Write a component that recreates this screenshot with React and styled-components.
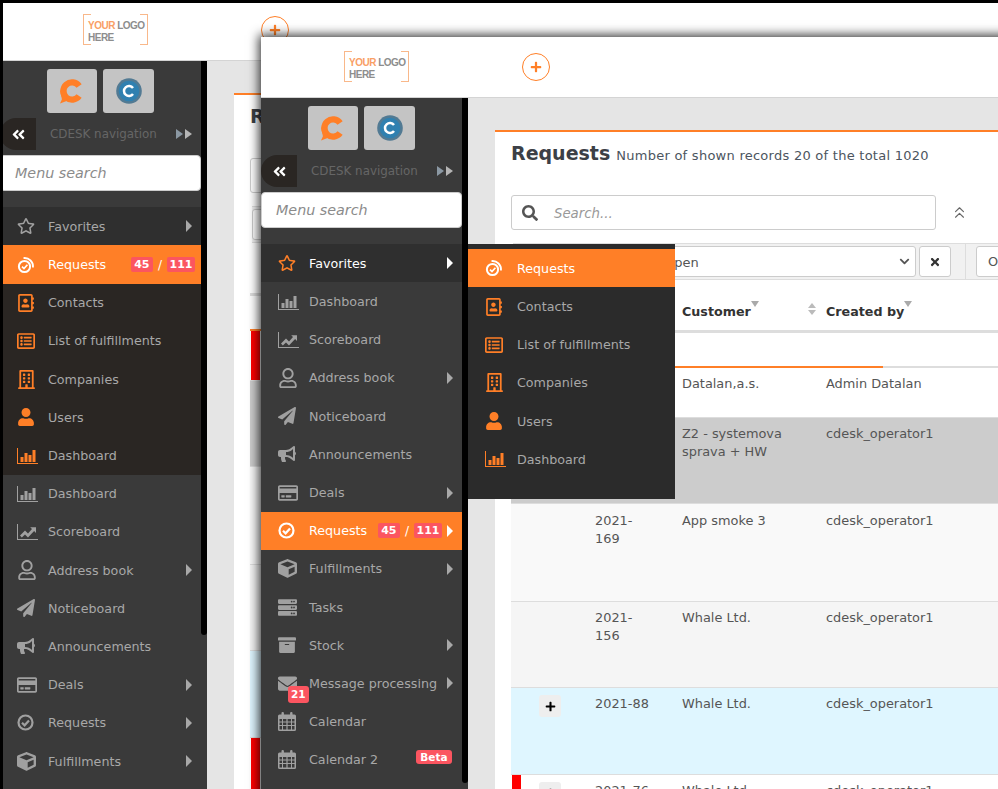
import React from "react";
import styled, { createGlobalStyle } from "styled-components";
import { ChevronsUp } from "lucide-react";
import {
  FaAngleDoubleLeft,
  FaArchive,
  FaBullhorn,
  FaChevronDown,
  FaCube,
  FaEnvelope,
  FaPaperPlane,
  FaPlus,
  FaRegAddressBook,
  FaRegBuilding,
  FaRegCreditCard,
  FaRegListAlt,
  FaRegStar,
  FaRegUser,
  FaSearch,
  FaServer,
  FaTimes,
  FaUser,
} from "react-icons/fa";

const ORANGE = "#ff7f27";

const GlobalStyle = createGlobalStyle`
  html, body {
    margin: 0;
    padding: 0;
    background: #000;
  }
  * {
    box-sizing: border-box;
  }
`;

const Desktop = styled.div`
  position: relative;
  width: 998px;
  height: 789px;
  overflow: hidden;
  font-family: "DejaVu Sans", Verdana, sans-serif;
  font-size: 12.9px;
`;

const Win = styled.div`
  position: absolute;
  left: ${(p) => p.$left}px;
  top: ${(p) => p.$top}px;
  width: 1000px;
  height: 800px;
  display: flex;
  flex-direction: column;
  background: #e5e5e5;
  box-shadow: ${(p) => (p.$front ? "0 0 10px 2px rgba(0, 0, 0, 0.8)" : "none")};
`;

const BlackEdge = styled.div`
  position: absolute;
  inset: 0;
  border-top: 3px solid #000;
  border-left: 3px solid #000;
  pointer-events: none;
`;

const Header = styled.header`
  height: 61px;
  flex: none;
  display: flex;
  align-items: center;
  background: #fff;
  border-bottom: 1px solid #d4d4d4;
  padding-left: 83px;
`;

const Logo = styled.div`
  position: relative;
  width: 65px;
  height: 31px;
  margin-top: -1px;
  padding: 6px 0 0 5px;
  font-family: "Liberation Sans", Arial, sans-serif;
  font-weight: 700;
  font-size: 10px;
  line-height: 12px;
  letter-spacing: -0.5px;
  white-space: nowrap;
  color: #8d8d8d;
  &::before,
  &::after {
    content: "";
    position: absolute;
    top: 0;
    bottom: 0;
    width: 7px;
    border: 1px solid #f9b88a;
  }
  &::before {
    left: 0;
    border-right: 0;
  }
  &::after {
    right: 0;
    border-left: 0;
  }
`;

const LogoAccent = styled.span`
  color: #f9a066;
`;

const AddButton = styled.div`
  width: 28px;
  height: 28px;
  margin-left: 113px;
  border: 1px solid ${ORANGE};
  border-radius: 50%;
  display: flex;
  align-items: center;
  justify-content: center;
  color: ${ORANGE};
  font-size: 12px;
`;

const Body = styled.div`
  flex: 1;
  display: flex;
  min-height: 0;
`;

const Side = styled.aside`
  position: relative;
  width: 207px;
  flex: none;
  background: #3a3a3a;
  padding-right: 6px;
`;

const ScrollThumb = styled.div`
  position: absolute;
  top: 0;
  right: 0;
  width: 6px;
  height: ${(p) => p.$height}px;
  background: #000;
  border-radius: 0 0 3px 3px;
`;

const Tiles = styled.div`
  display: flex;
  gap: 6px;
  padding: 8px 0 0 47px;
`;

const Tile = styled.div`
  width: ${(p) => p.$w}px;
  height: 44px;
  background: #c4c4c4;
  border-radius: 3px;
  display: flex;
  align-items: center;
  justify-content: center;
`;

const NavTitleRow = styled.div`
  height: 32px;
  margin-top: 5px;
  display: flex;
  align-items: center;
`;

const CollapseTab = styled.div`
  width: 36px;
  height: 32px;
  background: #2a2623;
  border-radius: 16px 0 0 16px;
  display: flex;
  align-items: center;
  justify-content: center;
  color: #fff;
  font-size: 15px;
`;

const NavTitle = styled.span`
  margin: -1px 0 0 14px;
  color: #666;
  font-size: 11.9px;
`;

const ExpandArrows = styled.div`
  margin-left: 19px;
  display: flex;
  gap: 2px;
`;

const ExpandArrow = styled.i`
  width: 0;
  height: 0;
  border-left: 7px solid ${(p) => p.$color};
  border-top: 5.5px solid transparent;
  border-bottom: 5.5px solid transparent;
`;

const MenuSearch = styled.div`
  height: 36px;
  margin-top: 5px;
  padding-left: 14px;
  display: flex;
  align-items: center;
  background: #fff;
  border: 1px solid #ccc;
  border-radius: 4px;
  font-style: italic;
  font-size: 14.3px;
  color: #8b8b8b;
`;

const MenuList = styled.nav`
  margin-top: 16.3px;
`;

const Group = styled.div`
  background: #2a2623;
`;

const Row = styled.div`
  position: relative;
  height: 38.2px;
  padding: 0 9px 0 17px;
  display: flex;
  align-items: center;
  font-size: 12.7px;
  color: ${(p) => (p.$white ? "#fff" : "#a8a8a8")};
  background: ${(p) => p.$bg || "transparent"};
`;

const IconSlot = styled.span`
  width: 31px;
  flex: none;
  display: flex;
  align-items: center;
  font-size: 18px;
  color: ${(p) => p.$color || "#a0a0a0"};
`;

const Label = styled.span`
  white-space: nowrap;
`;

const RightSide = styled.span`
  margin-left: auto;
  margin-right: ${(p) => p.$bleed || 0}px;
  display: flex;
  align-items: center;
`;

const Caret = styled.i`
  margin-left: 5px;
  width: 0;
  height: 0;
  border-left: 6px solid ${(p) => (p.$white ? "#fff" : "#a8a8a8")};
  border-top: 6px solid transparent;
  border-bottom: 6px solid transparent;
`;

const Badge = styled.span`
  background: #fb5560;
  color: #fff;
  font-weight: 700;
  font-size: 11px;
  line-height: 15px;
  padding: 0 ${(p) => p.$pad || 2.5}px;
  border-radius: 2px;
`;

const Slash = styled.span`
  margin: 0 5px;
  color: #fff;
  font-size: 12px;
`;

const MailBadge = styled(Badge)`
  position: absolute;
  left: 27px;
  top: 22px;
  padding: 1px 3px;
  font-size: 10.5px;
  border-radius: 3px;
`;

const BetaBadge = styled(Badge)`
  font-size: 10.5px;
  line-height: 14px;
  padding: 0 4.5px;
  margin: -5px 1px 0 0;
  border-radius: 3px;
`;

const Flyout = styled.div`
  position: absolute;
  left: 207px;
  top: 146px;
  width: 207px;
  height: 255px;
  padding-top: 5.3px;
  background: #2b2b2b;
  z-index: 5;
  ${IconSlot} {
    width: 32px;
  }
`;

const Main = styled.main`
  flex: 1;
  padding: 32px 0 0 27px;
  min-width: 0;
`;

const Card = styled.section`
  height: 100%;
  background: #fff;
  border-top: 2px solid ${ORANGE};
  padding: 10px 0 0 16px;
`;

const TitleLine = styled.div`
  height: 24px;
  display: flex;
  align-items: baseline;
  gap: 6px;
  color: #3c4046;
`;

const PageTitle = styled.h1`
  margin: 0;
  font-size: 19px;
  font-weight: 700;
`;

const PageInfo = styled.span`
  font-size: 13px;
  letter-spacing: 0.26px;
  color: #4c5560;
`;

const SearchLine = styled.div`
  margin-top: 29px;
  display: flex;
  align-items: center;
`;

const SearchField = styled.div`
  width: 425px;
  height: 35px;
  display: flex;
  align-items: center;
  padding-left: 10px;
  border: 1px solid #ccc;
  border-radius: 3px;
  color: #555;
  font-size: 16px;
`;

const SearchHint = styled.span`
  margin: 1px 0 0 16px;
  font-size: 13.3px;
  font-style: italic;
  color: #999;
`;

const FoldIcon = styled.span`
  margin-left: 14px;
  color: #666;
  display: flex;
`;

const FilterBar = styled.div`
  margin: 13px 0 0 2px;
  height: 37px;
  display: flex;
  align-items: center;
  background: #f1f1f1;
  border-top: 1px solid #ddd;
  border-bottom: 1px solid #ddd;
`;

const SelectBox = styled.div`
  width: 403px;
  height: 31px;
  padding: 0 5px 0 150px;
  display: flex;
  align-items: center;
  justify-content: space-between;
  background: #fff;
  border: 1px solid #ccc;
  border-radius: 3px;
  color: #555;
  font-size: 13px;
`;

const SelectValue = styled.span`
  margin-top: 1px;
`;

const SquareButton = styled.div`
  width: 32px;
  height: 31px;
  margin-left: 3px;
  display: flex;
  align-items: center;
  justify-content: center;
  background: #fff;
  border: 1px solid #ccc;
  border-radius: 3px;
  color: #333;
  font-size: 12px;
`;

const Divider = styled.div`
  width: 1px;
  height: 35px;
  margin: 0 10px 0 14px;
  background: #ddd;
`;

const OpenButton = styled.div`
  width: 60px;
  height: 31px;
  padding-left: 11px;
  display: flex;
  align-items: center;
  background: #fff;
  border: 1px solid #ccc;
  border-radius: 3px;
  color: #555;
`;

const TableHead = styled.div`
  height: 53px;
  display: grid;
  grid-template-columns: 171px 144px 1fr;
  padding-top: 24px;
  border-bottom: 3px solid #ddd;
  font-weight: 700;
  font-size: 12.7px;
  color: #333;
`;

const HeadCell = styled.div`
  position: relative;
  grid-column: ${(p) => p.$col};
  display: flex;
  align-items: flex-start;
`;

const FilterMark = styled.i`
  margin: -3px 0 0 0;
  width: 0;
  height: 0;
  border-top: 6px solid #aaa;
  border-left: 4px solid transparent;
  border-right: 4px solid transparent;
`;

const SortMark = styled.span`
  position: absolute;
  left: -18px;
  top: -1px;
  display: flex;
  flex-direction: column;
  gap: 2px;
`;

const SortArrow = styled.i`
  width: 0;
  height: 0;
  border-left: 4.5px solid transparent;
  border-right: 4.5px solid transparent;
  ${(p) => (p.$up ? "border-bottom" : "border-top")}: 5px solid #bbb;
`;

const FilterGap = styled.div`
  height: 35px;
  border-bottom: 2px solid #ddd;
  position: relative;
`;

const Progress = styled.div`
  position: absolute;
  left: 0;
  bottom: -2px;
  height: 2px;
  width: 372px;
  background: ${ORANGE};
`;

const TableRow = styled.div`
  position: relative;
  height: ${(p) => p.$height}px;
  display: grid;
  grid-template-columns: 84px 87px 144px 1fr;
  padding-top: ${(p) => p.$pad || 7}px;
  background: ${(p) => p.$bg};
  border-bottom: 1px solid #ddd;
  color: #555;
  line-height: 18px;
`;

const RedMark = styled.div`
  position: absolute;
  left: 1px;
  top: 0;
  bottom: 0;
  width: 9px;
  background: #f00;
`;

const PlusCell = styled.div`
  padding-left: 28px;
`;

const PlusButton = styled.div`
  width: 22px;
  height: 22px;
  border-radius: 3px;
  background: #eee;
  color: #000;
  font-size: 11px;
  display: flex;
  align-items: center;
  justify-content: center;
`;

const BarsIcon = () => (
  <svg width="21" height="16" viewBox="0 0 21 16" fill="currentColor">
    <path d="M0 0h1v15h20v1H0z" />
    <rect x="3.5" y="9" width="3" height="5" />
    <rect x="7.5" y="5" width="3" height="9" />
    <rect x="11.5" y="7" width="3" height="7" />
    <rect x="15.5" y="2" width="3" height="12" />
  </svg>
);

const ScoreIcon = () => (
  <svg width="21" height="16" viewBox="0 0 21 16" fill="currentColor">
    <path d="M0 0h1v15h20v1H0z" />
    <path d="M3 11.5l5-5 3 3 4-4.5-1.8-1.8H19v5.7l-1.9-1.9-6.1 6.6-3-3-3.2 3z" />
  </svg>
);

const CheckIcon = () => (
  <svg width="17" height="17" viewBox="0 0 17 17" fill="none" stroke="currentColor">
    <circle cx="8.5" cy="8.5" r="7" strokeWidth="2.2" />
    <path d="M5 8.7l2.6 2.6L12 6.5" strokeWidth="2.2" />
  </svg>
);

const FavRequestIcon = () => (
  <svg width="18" height="18" viewBox="0 0 18 18" fill="none" stroke="currentColor">
    <circle cx="7.5" cy="10.5" r="5.6" strokeWidth="2" />
    <path d="M5 10.6l2 2 3.4-3.8" strokeWidth="1.7" />
    <path d="M6.5 2.1A8.5 8.5 0 0 1 16 11.5" strokeWidth="1.8" />
  </svg>
);

const CalendarIcon = () => (
  <svg width="18" height="19" viewBox="0 0 18 19" fill="currentColor">
    <rect x="3.5" y="0" width="2.4" height="4.5" rx="1" />
    <rect x="12.1" y="0" width="2.4" height="4.5" rx="1" />
    <path
      fillRule="evenodd"
      d="M0 4a1.5 1.5 0 0 1 1.5-1.5h15A1.5 1.5 0 0 1 18 4v13.5a1.5 1.5 0 0 1-1.5 1.5h-15A1.5 1.5 0 0 1 0 17.5zM1.5 7v2.5H4V7zM5 7v2.5h3.4V7zM9.6 7v2.5H13V7zM14 7v2.5h2.5V7zM1.5 10.6V13H4v-2.4zM5 10.6V13h3.4v-2.4zM9.6 10.6V13H13v-2.4zM14 10.6V13h2.5v-2.4zM1.5 14.1v3.4H4v-3.4zM5 14.1v3.4h3.4v-3.4zM9.6 14.1v3.4H13v-3.4zM14 14.1v3.4h2.5v-3.4z"
    />
  </svg>
);

const CLogo = () => (
  <svg width="24" height="25" viewBox="0 0 25 26" fill={ORANGE}>
    <path d="M19.9 7.3A9 9 0 1 0 19.9 17.7" fill="none" stroke={ORANGE} strokeWidth="6.5" />
    <path d="M0 12h6.5v9L9 22l-9 3.6 2-4.4z" />
  </svg>
);

const BlueLogo = () => (
  <svg width="26" height="26" viewBox="0 0 26 26">
    <circle cx="13" cy="13" r="12.8" fill="#527a93" />
    <circle cx="13" cy="13" r="10.3" fill="#2f80b0" />
    <path d="M17 10a5 5 0 1 0 0 6" fill="none" stroke="#fff" strokeWidth="2.5" />
  </svg>
);

const favorites = [
  { label: "Contacts", icon: <FaRegAddressBook /> },
  { label: "List of fulfillments", icon: <FaRegListAlt size={18} /> },
  { label: "Companies", icon: <FaRegBuilding size={19} /> },
  { label: "Users", icon: <FaUser /> },
  { label: "Dashboard", icon: <BarsIcon /> },
];

const dashboard = { label: "Dashboard", icon: <BarsIcon /> };
const scoreboard = { label: "Scoreboard", icon: <ScoreIcon /> };
const addressBook = { label: "Address book", icon: <FaRegUser size={20} />, caret: true };
const noticeboard = { label: "Noticeboard", icon: <FaPaperPlane /> };
const announcements = { label: "Announcements", icon: <FaBullhorn /> };
const deals = { label: "Deals", icon: <FaRegCreditCard size={20} />, caret: true };
const fulfillments = { label: "Fulfillments", icon: <FaCube size={19} />, caret: true };

const backMenu = [
  dashboard,
  scoreboard,
  addressBook,
  noticeboard,
  announcements,
  deals,
  { label: "Requests", icon: <CheckIcon />, caret: true },
  fulfillments,
];

const frontMenu = [
  dashboard,
  scoreboard,
  addressBook,
  noticeboard,
  announcements,
  deals,
  { label: "Requests", icon: <CheckIcon />, active: true, counts: true },
  fulfillments,
  { label: "Tasks", icon: <FaServer size={19} /> },
  { label: "Stock", icon: <FaArchive size={18} />, caret: true },
  { label: "Message processing", icon: <FaEnvelope size={19} />, caret: true, mail: "21" },
  { label: "Calendar", icon: <CalendarIcon /> },
  { label: "Calendar 2", icon: <CalendarIcon />, beta: true },
];

const tableRows = [
  { height: 50, bg: "#fff", red: true, customer: "Datalan,a.s.", by: "Admin Datalan" },
  {
    height: 86,
    bg: "#ccc",
    customer: (
      <>
        Z2 - systemova
        <br />
        sprava + HW
      </>
    ),
    by: "cdesk_operator1",
  },
  {
    height: 98,
    pad: 8,
    bg: "#f9f9f9",
    number: (
      <>
        2021-
        <br />
        169
      </>
    ),
    customer: "App smoke 3",
    by: "cdesk_operator1",
  },
  {
    height: 86,
    bg: "#f5f5f5",
    number: (
      <>
        2021-
        <br />
        156
      </>
    ),
    customer: "Whale Ltd.",
    by: "cdesk_operator1",
  },
  { height: 87, bg: "#dff6ff", plus: true, number: "2021-88", customer: "Whale Ltd.", by: "cdesk_operator1" },
  { height: 87, bg: "#fff", plus: true, red: true, number: "2021-76", customer: "Whale Ltd.", by: "cdesk_operator1" },
];

const Counts = () => (
  <>
    <Badge $pad={3.5}>45</Badge>
    <Slash>/</Slash>
    <Badge>111</Badge>
  </>
);

const MenuRow = ({ item, iconColor }) => (
  <Row $bg={item.active ? ORANGE : undefined} $white={item.active}>
    <IconSlot $color={item.active ? "#fff" : iconColor}>{item.icon}</IconSlot>
    <Label>{item.label}</Label>
    {item.mail && <MailBadge>{item.mail}</MailBadge>}
    <RightSide>
      {item.counts && <Counts />}
      {item.beta && <BetaBadge>Beta</BetaBadge>}
      {(item.caret || item.counts) && <Caret $white={item.active} />}
    </RightSide>
  </Row>
);

const FavoriteRows = () => (
  <>
    {favorites.map((item) => (
      <MenuRow key={item.label} item={item} iconColor={ORANGE} />
    ))}
  </>
);

const Sidebar = ({ front, thumb }) => (
  <Side>
    <Tiles>
      <Tile $w={50}>
        <CLogo />
      </Tile>
      <Tile $w={51}>
        <BlueLogo />
      </Tile>
    </Tiles>
    <NavTitleRow>
      <CollapseTab>
        <FaAngleDoubleLeft />
      </CollapseTab>
      <NavTitle>CDESK navigation</NavTitle>
      <ExpandArrows>
        <ExpandArrow $color="#8b98a3" />
        <ExpandArrow $color="#b5b5b5" />
      </ExpandArrows>
    </NavTitleRow>
    <MenuSearch>Menu search</MenuSearch>
    <MenuList>
      <Row $bg="#2f2f2f" $white={front}>
        <IconSlot $color={front ? ORANGE : undefined}>
          <FaRegStar size={18} />
        </IconSlot>
        <Label>Favorites</Label>
        <RightSide>
          <Caret $white={front} />
        </RightSide>
      </Row>
      {!front && (
        <Group>
          <Row $bg={ORANGE} $white>
            <IconSlot $color="#fff">
              <FavRequestIcon />
            </IconSlot>
            <Label>Requests</Label>
            <RightSide $bleed={-3}>
              <Counts />
            </RightSide>
          </Row>
          <FavoriteRows />
        </Group>
      )}
      {(front ? frontMenu : backMenu).map((item) => (
        <MenuRow key={item.label} item={item} />
      ))}
    </MenuList>
    <ScrollThumb $height={thumb} />
    {front && (
      <Flyout>
        <Row $bg={ORANGE} $white>
          <IconSlot $color="#fff">
            <FavRequestIcon />
          </IconSlot>
          <Label>Requests</Label>
        </Row>
        <FavoriteRows />
      </Flyout>
    )}
  </Side>
);

const Content = () => (
  <Main>
    <Card>
      <TitleLine>
        <PageTitle>Requests</PageTitle>
        <PageInfo>Number of shown records 20 of the total 1020</PageInfo>
      </TitleLine>
      <SearchLine>
        <SearchField>
          <FaSearch />
          <SearchHint>Search...</SearchHint>
        </SearchField>
        <FoldIcon>
          <ChevronsUp size={19} strokeWidth={1.4} />
        </FoldIcon>
      </SearchLine>
      <FilterBar>
        <SelectBox>
          <SelectValue>Open</SelectValue>
          <FaChevronDown size={11} />
        </SelectBox>
        <SquareButton>
          <FaTimes />
        </SquareButton>
        <Divider />
        <OpenButton>Open</OpenButton>
      </FilterBar>
      <TableHead>
        <HeadCell $col={2}>
          Customer
          <FilterMark />
        </HeadCell>
        <HeadCell $col={3}>
          <SortMark>
            <SortArrow $up />
            <SortArrow />
          </SortMark>
          Created by
          <FilterMark />
        </HeadCell>
      </TableHead>
      <FilterGap>
        <Progress />
      </FilterGap>
      {tableRows.map((row, index) => (
        <TableRow key={index} $height={row.height} $bg={row.bg} $pad={row.pad}>
          {row.red && <RedMark />}
          <PlusCell>
            {row.plus && (
              <PlusButton>
                <FaPlus />
              </PlusButton>
            )}
          </PlusCell>
          <div>{row.number}</div>
          <div>{row.customer}</div>
          <div>{row.by}</div>
        </TableRow>
      ))}
    </Card>
  </Main>
);

const AppWindow = ({ left, top, front, thumb }) => (
  <Win $left={left} $top={top} $front={front}>
    <Header>
      <Logo>
        <LogoAccent>YOUR</LogoAccent> LOGO
        <br />
        HERE
      </Logo>
      <AddButton>
        <FaPlus />
      </AddButton>
    </Header>
    <Body>
      <Sidebar front={front} thumb={thumb} />
      <Content />
    </Body>
    {!front && <BlackEdge />}
  </Win>
);

export default function App() {
  return (
    <Desktop>
      <GlobalStyle />
      <AppWindow left={0} top={0} thumb={574} />
      <AppWindow left={261} top={37} front thumb={685} />
    </Desktop>
  );
}
